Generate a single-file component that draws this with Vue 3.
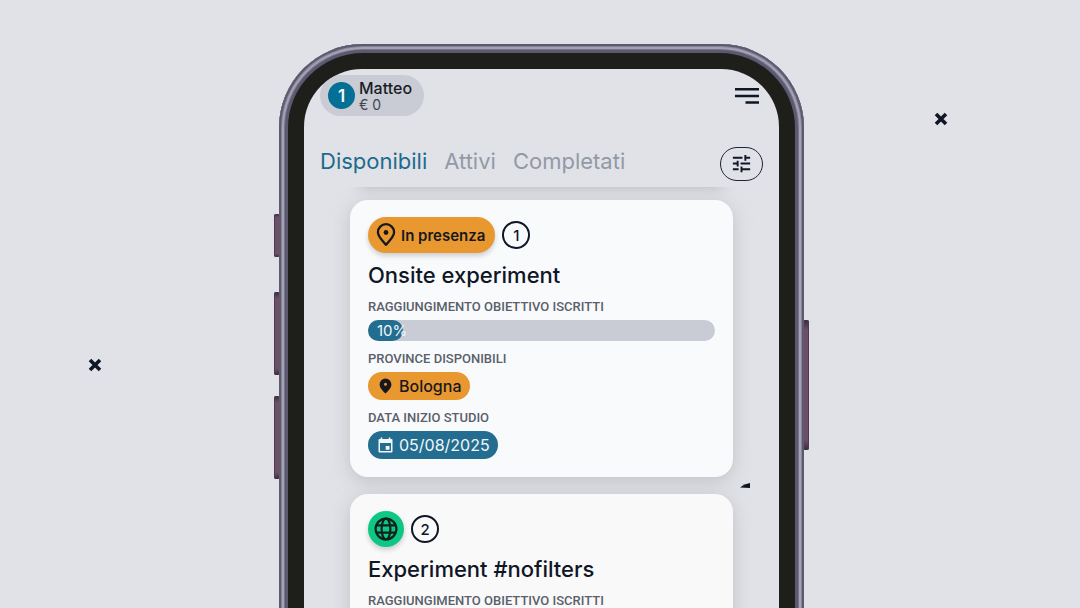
<script setup>
import { ref } from 'vue'

const tabs = ['Disponibili', 'Attivi', 'Completati']
const active = ref('Disponibili')

const experiments = [
  {
    id: 1,
    mode: 'onsite',
    title: 'Onsite experiment',
    progress: 10,
    province: 'Bologna',
    date: '05/08/2025',
  },
  {
    id: 2,
    mode: 'online',
    title: 'Experiment #nofilters',
    progress: null,
    province: null,
    date: null,
  },
]
</script>

<template>
  <main class="stage">
    <svg class="cross cross-left" viewBox="0 0 14 14" aria-hidden="true">
      <path d="M2 2 12 12M12 2 2 12" />
    </svg>
    <svg class="cross cross-right" viewBox="0 0 14 14" aria-hidden="true">
      <path d="M2 2 12 12M12 2 2 12" />
    </svg>

    <div class="phone">
      <i class="key key-mute"></i>
      <i class="key key-up"></i>
      <i class="key key-down"></i>
      <i class="key key-power"></i>
      <div class="frame">
        <div class="screen">
          <header class="top">
            <div class="user">
              <span class="level">1</span>
              <span class="who">
                <strong>Matteo</strong>
                <small>€ 0</small>
              </span>
            </div>
            <button class="menu" type="button" aria-label="Menu">
              <svg width="24" height="16" viewBox="0 0 24 16">
                <path d="M0 1.3H24M0 7.9H24M10.5 14.5H24" stroke="#0f1626" stroke-width="2.5" />
              </svg>
            </button>
          </header>

          <nav class="tabs">
            <button
              v-for="tab in tabs"
              :key="tab"
              type="button"
              class="tab"
              :class="{ on: tab === active }"
              @click="active = tab"
            >{{ tab }}</button>
            <button class="filter" type="button" aria-label="Filtri">
              <svg width="23" height="23" viewBox="0 0 24 24" fill="#0f1626">
                <path d="M3 17v2h6v-2H3zM3 5v2h10V5H3zm10 16v-2h8v-2h-8v-2h-2v6h2zM7 9v2H3v2h4v2h2V9H7zm14 4v-2H11v2h10zm-6-4h2V7h4V5h-4V3h-2v6z" />
              </svg>
            </button>
          </nav>

          <section class="list">
            <svg class="shard" viewBox="0 0 10 5" aria-hidden="true">
              <path d="M0 4.4Q4 1 10 0V5Z" fill="#0f1626" />
            </svg>
            <article v-for="item in experiments" :key="item.id" class="card" :class="item.mode">
              <div class="badges">
                <span v-if="item.mode === 'onsite'" class="mode">
                  <svg width="20" height="24" viewBox="0 0 20 24">
                    <path d="M10 21.8C5.4 16.9 1.9 13.3 1.9 9.3a8.1 8.1 0 0 1 16.2 0C18.1 13.3 14.6 16.9 10 21.8Z" fill="none" stroke="#17181d" stroke-width="2.3" stroke-linejoin="round" />
                    <circle cx="10" cy="9.5" r="2.4" fill="#17181d" />
                  </svg>
                  In presenza
                </span>
                <span v-else class="mode globe">
                  <svg width="24" height="24" viewBox="0 0 24 24" fill="none" stroke="#10201f" stroke-width="2.2">
                    <circle cx="12" cy="12" r="10.4" />
                    <ellipse cx="12" cy="12" rx="4.4" ry="10.4" />
                    <path d="M2.5 8.3H21.5M2.5 15.7H21.5" />
                  </svg>
                </span>
                <span class="number">{{ item.id }}</span>
              </div>
              <h2>{{ item.title }}</h2>
              <p class="label">RAGGIUNGIMENTO OBIETTIVO ISCRITTI</p>
              <div v-if="item.progress" class="bar">
                <div class="fill" :style="{ width: item.progress + '%' }">{{ item.progress }}%</div>
              </div>
              <template v-if="item.province">
                <p class="label">PROVINCE DISPONIBILI</p>
                <span class="chip place">
                  <svg width="13" height="16" viewBox="0 0 13 16">
                    <path fill-rule="evenodd" d="M6.5.5A5.9 5.9 0 0 0 .6 6.4C.6 9.8 3.7 12.6 6.5 15.5 9.3 12.6 12.4 9.8 12.4 6.4A5.9 5.9 0 0 0 6.5.5ZM6.5 4.8a1.5 1.5 0 1 1 0 3 1.5 1.5 0 0 1 0-3Z" fill="#17181d" />
                  </svg>
                  {{ item.province }}
                </span>
              </template>
              <template v-if="item.date">
                <p class="label">DATA INIZIO STUDIO</p>
                <span class="chip date">
                  <svg width="15" height="16" viewBox="0 0 15 16">
                    <path fill-rule="evenodd" d="M2.7.5H4.3V2H10.7V.5H12.3V2H13.5Q14.5 2 14.5 3V14.5Q14.5 15.5 13.5 15.5H1.5Q.5 15.5.5 14.5V3Q.5 2 1.5 2H2.7ZM2 6V14H13V6ZM7.7 9H11.5V12.8H7.7Z" fill="#f3f7fa" />
                  </svg>
                  {{ item.date }}
                </span>
              </template>
            </article>
          </section>
        </div>
      </div>
    </div>
  </main>
</template>

<style>
body {
  margin: 0;
  background: #e1e2e7;
}
</style>

<style scoped>
.stage {
  position: relative;
  box-sizing: border-box;
  height: 100vh;
  overflow: hidden;
  padding: 44px 16px 0 19px;
  background: #e1e2e7;
  font-family: Inter, "Noto Sans", sans-serif;
  color: #0f1626;
}
button {
  padding: 0;
  border: 0;
  background: none;
  font: inherit;
  color: inherit;
  cursor: pointer;
}
svg {
  display: block;
  flex: none;
}
.cross {
  position: absolute;
  width: 14px;
  height: 14px;
  fill: none;
  stroke: #0f1626;
  stroke-width: 3.6;
}
.cross-left {
  left: 88px;
  top: 358px;
}
.cross-right {
  right: 132px;
  top: 112px;
}
.phone {
  position: relative;
  max-width: 525px;
  margin: 0 auto;
}
.key {
  position: absolute;
  left: -5px;
  width: 6px;
  border-radius: 2px;
  background: linear-gradient(#3b2b40, #6d5068 8%, #6d5068 92%, #3b2b40);
  box-shadow: inset 1px 0 #4e3a4d;
}
.key-mute {
  top: 170px;
  height: 43px;
}
.key-up {
  top: 248px;
  height: 83px;
}
.key-down {
  top: 352px;
  height: 83px;
}
.key-power {
  left: auto;
  right: -5px;
  top: 276px;
  height: 130px;
  box-shadow: inset -1px 0 #4e3a4d;
}
.frame {
  position: relative;
  padding: 25px;
  border-radius: 84px;
  background: #1e1e1b;
  box-shadow: inset 0 0 0 2px #5d5a70, inset 0 0 0 3px #85839a, inset 0 0 0 5px #a3a2b1, inset 0 0 0 6px #77758b, inset 0 0 0 9px #5b5870;
}
.screen {
  overflow: hidden;
  border-radius: 58px;
  background: #e1e2e7;
}
.top {
  display: flex;
  justify-content: space-between;
  align-items: center;
  padding: 6px 20px 0 16px;
}
.user {
  display: flex;
  align-items: center;
  gap: 4px;
  padding: 0 12px 0 8px;
  height: 41px;
  border-radius: 21px;
  background: #c9ccd4;
}
.level {
  display: grid;
  place-items: center;
  width: 27px;
  height: 27px;
  border-radius: 50%;
  background: #057095;
  color: #f3f7fa;
  font-size: 17px;
  font-weight: 600;
}
.who {
  display: grid;
}
.who strong {
  font-size: 16px;
  line-height: 18px;
  font-weight: 500;
  color: #1a1d28;
}
.who small {
  font-size: 14px;
  line-height: 16px;
  color: #41454f;
}
.tabs {
  display: flex;
  align-items: center;
  gap: 17px;
  height: 45px;
  padding: 25px 16px 1px;
}
.tab {
  height: 34px;
  font-size: 22px;
  line-height: 26px;
  padding-bottom: 6px;
  font-weight: 400;
  color: #9399a5;
}
.tab.on {
  color: #1c6b8c;
}
.filter {
  display: grid;
  place-items: center;
  box-sizing: border-box;
  width: 43px;
  height: 34px;
  margin-left: auto;
  border: 1px solid #1d2433;
  border-radius: 17px;
}
.list {
  position: relative;
  display: grid;
  gap: 17px;
  padding: 13px 46px 40px;
  overflow: hidden;
}
.list::before {
  content: "";
  position: absolute;
  left: 56px;
  right: 56px;
  top: -20px;
  height: 16px;
  box-shadow: 0 4px 14px #b4b6bb;
}
.shard {
  position: absolute;
  right: 29px;
  top: 296px;
  width: 10px;
  height: 5px;
}
.card {
  position: relative;
  padding: 17px 18px 18px;
  border-radius: 18px;
  background: #f9fafc;
  box-shadow: 0 4px 18px #a4a6ab88;
}
.card.online {
  background: #f9f9f9;
}
.badges {
  display: flex;
  align-items: center;
  gap: 7px;
  height: 36px;
}
.mode {
  display: flex;
  align-items: center;
  gap: 5px;
  box-sizing: border-box;
  height: 36px;
  padding: 0 10px 0 8px;
  border-radius: 18px;
  background: #e99830;
  box-shadow: 0 3px 5px #0f162630;
  color: #17181d;
  font-size: 15px;
  font-weight: 600;
}
.mode.globe {
  justify-content: center;
  width: 36px;
  padding: 0;
  background: #0fc784;
}
.number {
  display: grid;
  place-items: center;
  box-sizing: border-box;
  width: 28px;
  height: 28px;
  border: 2px solid #0f1626;
  border-radius: 50%;
  font-size: 15px;
  font-weight: 500;
}
h2 {
  margin: 7px 0 5px;
  font-size: 22px;
  line-height: 30px;
  font-weight: 500;
}
.label {
  margin: 0 0 2px;
  font-family: Roboto, Inter, sans-serif;
  font-size: 13px;
  line-height: 23px;
  font-weight: 500;
  color: #5a5f6b;
}
.online .label {
  padding-bottom: 24px;
}
.bar {
  height: 21px;
  margin-bottom: 6px;
  border-radius: 11px;
  background: #c9ccd4;
}
.fill {
  box-sizing: border-box;
  height: 21px;
  padding-left: 9px;
  border-radius: 11px;
  background: #236d90;
  color: #f3f7fa;
  font-size: 15px;
  line-height: 21px;
  white-space: nowrap;
}
.chip {
  display: flex;
  align-items: center;
  gap: 7px;
  box-sizing: border-box;
  width: max-content;
  height: 28px;
  padding: 0 8px 0 11px;
  border-radius: 14px;
  font-size: 16px;
}
.place {
  margin-bottom: 6px;
  background: #e99830;
  color: #17181d;
  font-weight: 500;
}
.date {
  gap: 6px;
  padding-left: 10px;
  background: #236d90;
  color: #f3f7fa;
}
</style>
